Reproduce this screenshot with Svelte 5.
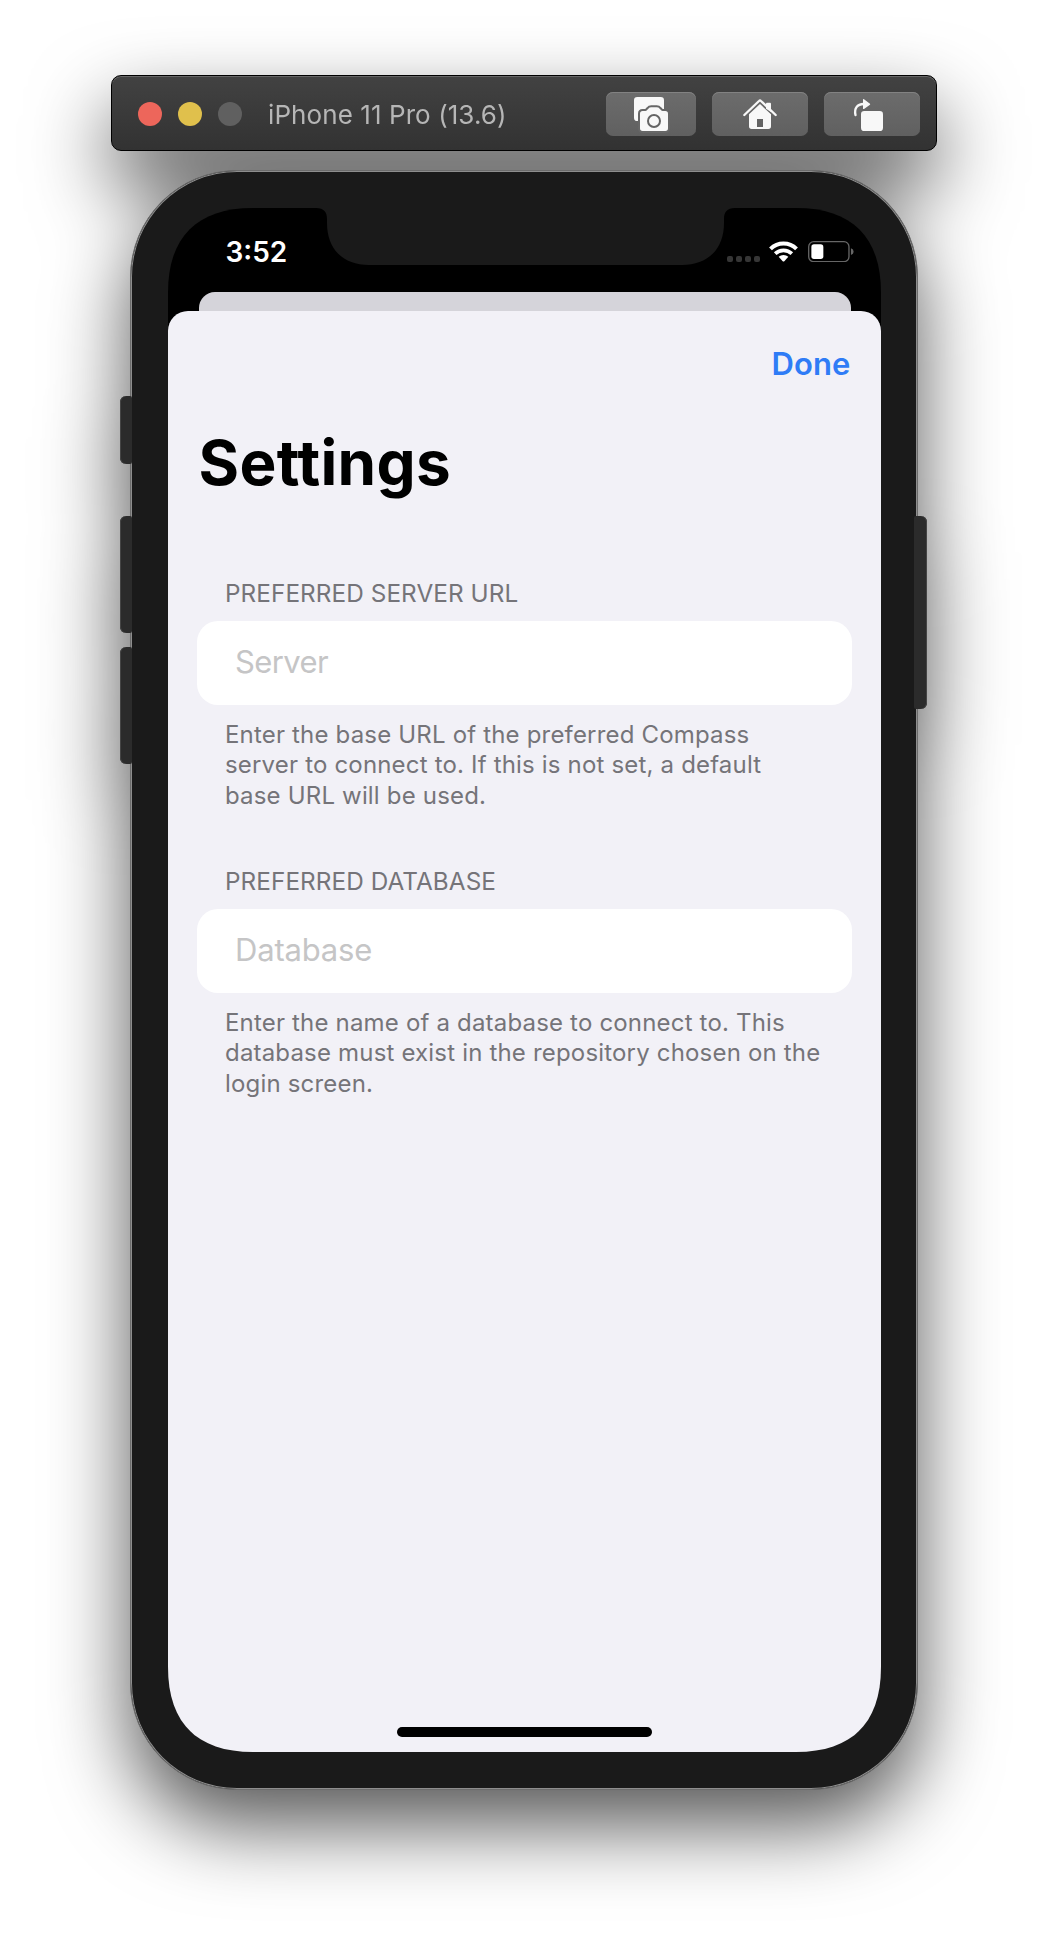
<script>
  const sections = [
    {
      label: 'PREFERRED SERVER URL',
      placeholder: 'Server',
      tracking: '-0.6px',
      help: [
        'Enter the base URL of the preferred Compass',
        'server to connect to. If this is not set, a default',
        'base URL will be used.'
      ]
    },
    {
      label: 'PREFERRED DATABASE',
      placeholder: 'Database',
      tracking: '-0.18px',
      help: [
        'Enter the name of a database to connect to. This',
        'database must exist in the repository chosen on the',
        'login screen.'
      ]
    }
  ];
</script>

<div class="stage">
  <div class="simulator">
    <header class="toolbar">
      <div class="lights">
        <span class="light close"></span>
        <span class="light minimize"></span>
        <span class="light zoom"></span>
      </div>
      <div class="title">iPhone 11 Pro (13.6)</div>
      <div class="actions">
        <button class="tool small" aria-label="Screenshot">
          <svg viewBox="0 0 270 132">
            <path fill="#f8f8f8" d="M94 15H164Q174 15 174 25V70H110V87H94Q84 87 84 77V25Q84 15 94 15Z" />
            <path
              fill="#f8f8f8" stroke="#676767" stroke-width="12" paint-order="stroke" stroke-linejoin="round"
              d="M110 57H118Q121 57 124 53L127 50Q130 46 136 46H152Q158 46 161 50L164 53Q167 57 170 57H178Q186 57 186 65V109Q186 117 178 117H110Q102 117 102 109V65Q102 57 110 57Z"
            />
            <circle cx="144" cy="87" r="18" fill="#f8f8f8" stroke="#646464" stroke-width="6" />
          </svg>
        </button>
        <button class="tool" aria-label="Home">
          <svg viewBox="0 0 288 132">
            <path fill="#f8f8f8" d="M162 50V35Q162 32 165 32H174Q177 32 177 35V60Z" />
            <path fill="none" stroke="#f8f8f8" stroke-width="7" stroke-linecap="round" stroke-linejoin="round" d="M97 69L141 27Q144 24 147 27L191 69" />
            <path fill="#f8f8f8" fill-rule="evenodd" d="M144 36L177 67V103Q177 111 169 111H119Q111 111 111 103V67ZM135 81H153V105H135Z" />
          </svg>
        </button>
        <button class="tool" aria-label="Rotate">
          <svg viewBox="0 0 288 132">
            <rect x="111" y="57" width="66" height="60" rx="10" fill="#f8f8f8" />
            <path fill="none" stroke="#f8f8f8" stroke-width="7" stroke-linecap="round" d="M94.500 69C90 50 99 36 119 36" />
            <path fill="#f8f8f8" d="M117 22Q118 20 120 22L138 35Q139 36 138 38L120 51Q118 52 117 50Z" />
          </svg>
        </button>
      </div>
    </header>

    <div class="phone">
      <i class="key mute"></i>
      <i class="key up"></i>
      <i class="key down"></i>
      <i class="key power"></i>

      <div class="screen">
        <div class="status">
          <div class="time">3:52</div>
          <svg class="notch" viewBox="0 0 397 57" width="397" height="57">
            <path fill="#1a1a1a" d="M-11 0C-3 0 0 4 0 11V15C0 41 16 57 42 57H355C381 57 397 41 397 15V11C397 4 400 0 408 0Z" />
          </svg>
          <div class="indicators">
            <div class="dots"><b></b><b></b><b></b><b></b></div>
            <svg class="wifi" viewBox="0 0 87 63" width="29" height="21">
              <g fill="none" stroke="#fff">
                <path stroke-width="12" d="M4.500 23.500A56 56 0 0 1 82.500 23.500" />
                <path stroke-width="11" d="M18.500 38A36 36 0 0 1 68.500 38" />
              </g>
              <path fill="#fff" d="M29 47.500A22 22 0 0 1 58 47.500L46 60.500Q43.500 63 41 60.500Z" />
            </svg>
            <svg class="battery" viewBox="0 0 138 64" width="46" height="21.300">
              <rect x="2" y="2" width="121" height="60" rx="15" fill="none" stroke="#666" stroke-width="4" />
              <rect x="10" y="10" width="36" height="44" rx="8" fill="#fff" />
              <path fill="#666" d="M129 22Q137 25 137 32Q137 39 129 42Z" />
            </svg>
          </div>
        </div>
        <div class="backsheet"></div>
        <main class="sheet">
          <button class="done">Done</button>
          <h1>Settings</h1>
          {#each sections as s}
            <section>
              <h2>{s.label}</h2>
              <div class="field" style="letter-spacing: {s.tracking}">{s.placeholder}</div>
              <p>{#each s.help as line}<span>{line}</span>{/each}</p>
            </section>
          {/each}
          <div class="home"></div>
        </main>
      </div>
    </div>
  </div>
</div>

<style>
  :global(body) {
    background: #fff;
  }
  .stage {
    height: 1938px;
    padding-top: 75px;
    box-sizing: border-box;
    overflow: hidden;
    font-family: Inter, 'Liberation Sans', sans-serif;
  }
  .simulator {
    display: flex;
    flex-direction: column;
    align-items: center;
    gap: 19px;
    filter: drop-shadow(0 36px 40px rgba(0, 0, 0, 0.66));
  }
  button {
    border: 0;
    padding: 0;
    margin: 0;
    font: inherit;
    background: none;
  }

  /* window toolbar */
  .toolbar {
    width: 826px;
    height: 76px;
    box-sizing: border-box;
    display: flex;
    align-items: center;
    padding: 0 16px 0 26px;
    border: 1px solid #000;
    border-radius: 10px;
    background: linear-gradient(#424242, #323232);
    box-shadow: inset 0 1px 0 #666;
  }
  .lights {
    display: flex;
    gap: 16px;
    padding-top: 2px;
  }
  .light {
    width: 24px;
    height: 24px;
    border-radius: 50%;
  }
  .close { background: #ed665b; }
  .minimize { background: #e0c04c; }
  .zoom { background: #606060; }
  .title {
    margin-left: 26px;
    padding-top: 3px;
    font-size: 26px;
    font-weight: 400;
    line-height: 32px;
    letter-spacing: 0.08px;
    color: #b6b6b6;
    white-space: nowrap;
  }
  .actions {
    display: flex;
    gap: 16px;
    margin-left: auto;
    padding-top: 2px;
  }
  .tool {
    display: block;
    width: 96px;
    height: 44px;
    border-radius: 7px;
    background: linear-gradient(#6c6c6c, #606060);
    box-shadow: inset 0 1px 0 #828282;
  }
  .tool.small { width: 90px; }
  .tool svg {
    display: block;
    width: 100%;
    height: 100%;
  }

  /* device body */
  .phone {
    position: relative;
    width: 788px;
    height: 1620px;
    box-sizing: border-box;
    border: 1px solid #6c6c6c;
    border-radius: 107px;
    padding: 37px 36px 37px 37px;
    background: #1a1a1a;
    box-shadow: inset 0 0 0 1px #8e8e8e;
  }
  .key {
    position: absolute;
    left: -11.5px;
    width: 12.5px;
    background: #2b2b2b;
    border-radius: 6px 2px 2px 6px;
    box-shadow: inset 1px 0 0 #454545;
  }
  .mute { top: 225px; height: 68px; }
  .up { top: 345px; height: 117px; }
  .down { top: 476px; height: 117px; }
  .power {
    left: auto;
    right: -9.5px;
    top: 345px;
    height: 193px;
    border-radius: 2px 6px 6px 2px;
    box-shadow: inset -1px 0 0 #454545;
  }
  .screen {
    width: 713px;
    height: 1544px;
    display: flex;
    flex-direction: column;
    background: #000;
    clip-path: path('M0 85C0 29 29 0 85 0H628C684 0 713 29 713 85V1459C713 1515 684 1544 628 1544H85C29 1544 0 1515 0 1459Z');
  }

  /* status bar */
  .status {
    height: 83.5px;
    flex: none;
    display: grid;
    grid-template-columns: 158.5px 397px 1fr;
  }
  .time {
    padding: 27px 0 0 57.5px;
    font-size: 28px;
    font-weight: 600;
    line-height: 34px;
    color: #fff;
  }
  .notch {
    display: block;
    overflow: visible;
  }
  .indicators {
    display: flex;
    align-items: flex-end;
    height: 54px;
    padding-left: 3px;
  }
  .dots {
    display: flex;
    gap: 3px;
    width: 42px;
  }
  .dots b {
    width: 6px;
    height: 6px;
    border-radius: 2px;
    background: #363636;
  }
  .battery { margin-left: 10px; }

  /* stacked sheets */
  .backsheet {
    flex: none;
    height: 19px;
    margin: 0 30.5px 0 31px;
    border-radius: 16px 16px 0 0;
    background: #d5d4da;
  }
  .sheet {
    flex: 1;
    display: flex;
    flex-direction: column;
    padding: 33.500px 0 15px;
    border-radius: 20px 20px 0 0;
    background: #f2f1f7;
  }
  .done {
    align-self: flex-end;
    margin-right: 30.5px;
    font-size: 31px;
    font-weight: 600;
    line-height: 40px;
    letter-spacing: 0.1px;
    color: #2f7cf6;
  }
  h1 {
    margin: 43.300px 0 78.700px 30.5px;
    font-size: 62px;
    font-weight: 700;
    line-height: 72px;
    letter-spacing: 0.3px;
    color: #000;
  }
  section { margin-bottom: 54.800px; }
  h2 {
    margin: 0 0 13.100px 57px;
    font-size: 24.300px;
    font-weight: 400;
    line-height: 30px;
    letter-spacing: 0.08px;
    color: #757479;
  }
  .field {
    height: 84px;
    box-sizing: border-box;
    display: flex;
    align-items: center;
    margin: 0 29px;
    padding: 0 0 3px 38px;
    border-radius: 21px;
    background: #fff;
    font-size: 31px;
    color: #c5c5c6;
  }
  p {
    margin: 14.900px 0 0 57px;
    font-size: 24px;
    line-height: 30.400px;
    letter-spacing: 0.18px;
    color: #757479;
  }
  p span {
    display: block;
    white-space: nowrap;
  }
  .home {
    align-self: center;
    width: 255px;
    height: 10px;
    margin-top: auto;
    border-radius: 5px;
    background: #000;
  }
</style>
